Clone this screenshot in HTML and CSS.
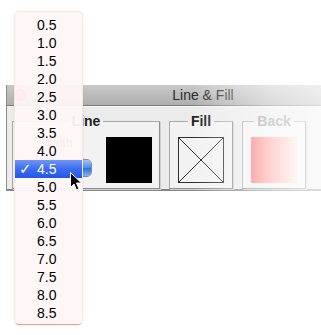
FILE: index.html
```html
<!DOCTYPE html>
<html>
<head>
<meta charset="utf-8">
<title>Line &amp; Fill</title>
<link rel="stylesheet" href="styles.css">
</head>
<body>
<div class="stage">
  <div class="window">
    <div class="titlebar">
      <span class="close"></span>
      <span class="title">Line &amp; Fill</span>
    </div>
    <div class="content">
      <div class="well line-well">
        <span class="legend">Line</span>
        <div class="well-body">
          <div class="width-col">
            <span class="width-label">Width</span>
            <div class="popup"><span class="popup-cap"></span></div>
          </div>
          <div class="swatch black"></div>
        </div>
      </div>
      <div class="well">
        <span class="legend">Fill</span>
        <div class="swatch none">
          <svg width="44" height="44" viewBox="0 0 44 44">
            <line x1="0" y1="0" x2="44" y2="44" stroke="#2e2e2e" stroke-width="1"/>
            <line x1="44" y1="0" x2="0" y2="44" stroke="#2e2e2e" stroke-width="1"/>
            <rect x="21" y="21" width="2" height="2" fill="#222"/>
          </svg>
        </div>
      </div>
      <div class="well back-well">
        <span class="legend back-legend">Back</span>
        <div class="swatch pink"></div>
      </div>
    </div>
  </div>
  <div class="fade"></div>
  <ul class="menu">
    <li class="item"><span class="check"></span>0.5</li>
    <li class="item"><span class="check"></span>1.0</li>
    <li class="item"><span class="check"></span>1.5</li>
    <li class="item"><span class="check"></span>2.0</li>
    <li class="item"><span class="check"></span>2.5</li>
    <li class="item"><span class="check"></span>3.0</li>
    <li class="item"><span class="check"></span>3.5</li>
    <li class="item"><span class="check"></span>4.0</li>
    <li class="item selected"><span class="check">✓</span>4.5</li>
    <li class="item"><span class="check"></span>5.0</li>
    <li class="item"><span class="check"></span>5.5</li>
    <li class="item"><span class="check"></span>6.0</li>
    <li class="item"><span class="check"></span>6.5</li>
    <li class="item"><span class="check"></span>7.0</li>
    <li class="item"><span class="check"></span>7.5</li>
    <li class="item"><span class="check"></span>8.0</li>
    <li class="item"><span class="check"></span>8.5</li>
  </ul>
  <svg class="cursor" width="14" height="21" viewBox="0 0 14 21">
    <path d="M1.5 1.5 L1.5 16.5 L5 13 L7.5 19 L10 18 L7.5 12 L12.5 12 Z" fill="#000" stroke="#fff" stroke-width="1" stroke-linejoin="round"/>
  </svg>
</div>
</body>
</html>
```

FILE: styles.css
```css
html, body {
  margin: 0;
  padding: 0;
  background: #ffffff;
}

.stage {
  position: relative;
  width: 321px;
  height: 335px;
  overflow: hidden;
  background: #ffffff;
  font-family: "Liberation Sans", Arial, sans-serif;
}

.window {
  margin-top: 85px;
  margin-left: 6px;
  width: 394px;
  border-left: 1px solid #8c8c8c;
  box-sizing: border-box;
}

.titlebar {
  height: 20px;
  display: flex;
  align-items: center;
  padding-left: 7px;
  background: linear-gradient(#c9c9c9, #aeaeae);
  border-bottom: 1px solid #7b7b7b;
}

.close {
  width: 12px;
  height: 12px;
  border-radius: 50%;
  background: radial-gradient(circle at 50% 35%, #ff8a80, #d9231c 70%);
  border: 1px solid #9c1b15;
  box-sizing: border-box;
}

.title {
  flex: 1;
  text-align: center;
  padding-right: 20px;
  font-size: 14px;
  line-height: 20px;
  color: #2b2b2b;
}

.content {
  display: flex;
  gap: 9px;
  padding: 14px 0 1px 5px;
  background: #ebebeb;
  border-top: 1px solid #f6f6f6;
  border-bottom: 2px solid #858585;
  box-sizing: border-box;
  height: 85px;
}

.well {
  width: 64px;
  height: 68px;
  box-sizing: border-box;
  display: flex;
  flex-direction: column;
  align-items: center;
  background: #f2f2f2;
  border: 1px solid #a9a9a9;
  border-right-color: #8f8f8f;
  border-bottom-color: #8f8f8f;
  box-shadow: 1px 1px 0 #cfcfcf;
}

.line-well {
  width: 148px;
  align-items: stretch;
}

.legend {
  align-self: center;
  margin-top: -8px;
  padding: 0 3px;
  font-size: 14px;
  font-weight: bold;
  line-height: 14px;
  color: #1e1e1e;
  background: linear-gradient(#ebebeb 50%, #f2f2f2 50%);
}

.back-legend {
  color: #9a9a9a;
}

.well-body {
  display: flex;
  gap: 14px;
  padding: 9px 7px 0 9px;
}

.width-col {
  width: 70px;
  display: flex;
  flex-direction: column;
  align-items: center;
}

.width-label {
  font-size: 12px;
  line-height: 12px;
  color: #444;
}

.popup {
  margin-top: 10px;
  width: 70px;
  height: 18px;
  box-sizing: border-box;
  border: 1px solid #8a8a8a;
  border-radius: 5px;
  background: #ffffff;
  display: flex;
  justify-content: flex-end;
  overflow: hidden;
}

.popup-cap {
  width: 16px;
  background: linear-gradient(#9cc3f5, #4f8be6 50%, #2d6fd8 51%, #7fb2f2);
}

.swatch {
  width: 46px;
  height: 46px;
  box-sizing: border-box;
  margin-top: 9px;
  flex: none;
}

.well-body .swatch {
  margin-top: 0;
}

.black {
  background: #000000;
}

.none {
  border: 1px solid #2e2e2e;
  background: #f2f2f2;
}

.none svg {
  display: block;
}

.pink {
  background: linear-gradient(to right, #ff6e6e, #ffe2e2);
}

.fade {
  position: absolute;
  inset: 0;
  pointer-events: none;
  background: linear-gradient(to right,
    rgba(255,255,255,0) 0,
    rgba(255,255,255,0) 192px,
    rgba(255,255,255,0.28) 226px,
    rgba(255,255,255,0.55) 272px,
    rgba(255,255,255,0.72) 321px);
}

.menu {
  position: absolute;
  left: 14px;
  top: 11px;
  width: 69px;
  margin: 0;
  padding: 4px 0 2px;
  list-style: none;
  box-sizing: border-box;
  background: rgba(255, 245, 245, 0.95);
  border: 1px solid #f6e6e6;
  border-bottom-color: #d6a3a3;
  border-radius: 5px;
  box-shadow: 0 1px 2px rgba(160, 80, 80, 0.12);
}

.item {
  display: flex;
  height: 18px;
  line-height: 18px;
  padding-left: 4px;
  font-size: 14px;
  color: #000000;
}

.check {
  width: 18px;
  flex: none;
  font-family: "DejaVu Sans", sans-serif;
  font-weight: bold;
  font-size: 15px;
}

.selected {
  color: #ffffff;
  background: linear-gradient(#7196f6, #3e6cf0 50%, #2355ea);
}

.cursor {
  position: absolute;
  left: 69px;
  top: 171px;
}
```
